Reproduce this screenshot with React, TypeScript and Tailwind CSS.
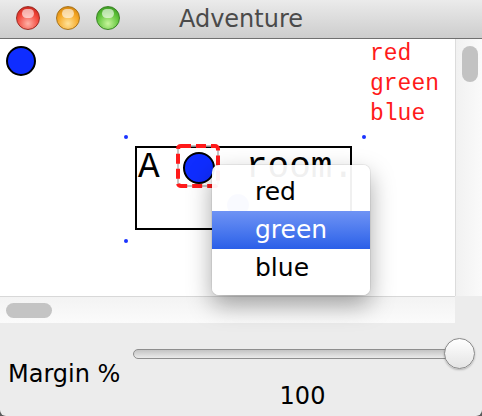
import React from 'react';

const ui = { fontFamily: '"DejaVu Sans", "Noto Sans", sans-serif' };
const mono = { fontFamily: '"Liberation Mono", "Courier New", monospace' };

function Light({ tone }: { tone: 'red' | 'yellow' | 'green' }) {
  const cls =
    tone === 'red'
      ? 'bg-[radial-gradient(circle_at_50%_75%,#ffb3a8_0%,#f2463a_55%,#b5180f_100%)] border-[#9c2d25]'
      : tone === 'yellow'
      ? 'bg-[radial-gradient(circle_at_50%_75%,#ffe39a_0%,#f5a623_55%,#c27508_100%)] border-[#a8741d]'
      : 'bg-[radial-gradient(circle_at_50%_75%,#c8f59c_0%,#5fc43a_55%,#2c8618_100%)] border-[#3b8527]';
  return (
    <div className={`relative h-[24px] w-[24px] rounded-full border ${cls}`}>
      <div className="absolute left-[5px] top-[2px] h-[9px] w-[12px] rounded-full bg-white/60" />
    </div>
  );
}

function Dot({ x, y }: { x: number; y: number }) {
  return <div className="absolute h-[4px] w-[4px] rounded-full bg-[#1a33ff]" style={{ left: x - 2, top: y - 2 }} />;
}

export default function App() {
  const items = ['red', 'green', 'blue'];
  return (
    <div className="h-[416px] w-[482px] bg-[#5a5a5a]" style={ui}>
      <div className="relative flex h-full flex-col overflow-hidden rounded-b-[6px] bg-[#ececec]">
        {/* title bar */}
        <div className="relative flex h-[39px] shrink-0 items-center justify-center border-b border-[#707070] bg-gradient-to-b from-[#ebebeb] to-[#cdcdcd]">
          <div className="absolute left-[16px] top-[6px] flex gap-[16px]">
            <Light tone="red" />
            <Light tone="yellow" />
            <Light tone="green" />
          </div>
          <span className="text-[24px] leading-[28px] text-[#4a4a4a]">Adventure</span>
        </div>

        {/* canvas + vertical scrollbar */}
        <div className="flex h-[257px] shrink-0">
          <div className="relative flex-1 overflow-hidden bg-white">
            <div className="absolute left-[6px] top-[7px] h-[30px] w-[30px] rounded-full border-2 border-black bg-[#0f2dff]" />

            <div className="absolute left-[370px] top-0 text-[23px] leading-[30px] text-[#ff1a1a]" style={mono}>
              <div>red</div>
              <div>green</div>
              <div>blue</div>
            </div>

            <Dot x={126} y={98} />
            <Dot x={364} y={98} />
            <Dot x={126} y={202} />

            <div className="absolute left-[135px] top-[107px] h-[84px] w-[217px] border-2 border-black">
              <div className="whitespace-pre pl-[1px] text-[36px] leading-[40px] text-black" style={mono}>
                {'A    room.'}
              </div>
            </div>

            {/* ghost circle under the menu */}
            <div className="absolute left-[227px] top-[155px] h-[22px] w-[22px] rounded-full bg-[#0f2dff]/40" />

            {/* selected circle */}
            <svg className="absolute left-[176px] top-[105px]" width="44" height="44" viewBox="0 0 44 44">
              <rect x="2" y="2" width="40" height="40" rx="3" fill="none" stroke="#b3b3b3" strokeWidth="1.5" />
              <rect x="2" y="2" width="40" height="40" rx="3" fill="none" stroke="#ff1a1a" strokeWidth="4" strokeDasharray="10 5" />
              <circle cx="23" cy="24" r="15" fill="#0f2dff" stroke="#000" strokeWidth="2" />
            </svg>
          </div>
          <div className="relative w-[27px] border-l border-[#dcdcdc] bg-gradient-to-r from-[#f1f1f1] to-[#fafafa]">
            <div className="absolute left-[6px] top-[7px] h-[36px] w-[16px] rounded-full bg-[#c2c2c2]" />
          </div>
        </div>

        {/* horizontal scrollbar */}
        <div className="flex h-[27px] shrink-0">
          <div className="flex flex-1 items-center border-t border-[#d8d8d8] bg-gradient-to-b from-[#f3f3f3] to-[#fbfbfb] pl-[6px]">
            <div className="h-[15px] w-[46px] rounded-full bg-[#c4c4c4]" />
          </div>
          <div className="w-[27px] bg-[#ececec]" />
        </div>

        {/* bottom panel */}
        <div className="flex flex-1 pl-[8px]">
          <div className="w-[125px] pt-[37px] text-[24px] leading-[28px] text-black">Margin %</div>
          <div className="flex w-[339px] flex-col pt-[15px]">
            <div className="relative h-[31px]">
              <div className="absolute left-0 right-0 top-[11px] h-[10px] rounded-full border border-[#8e8e8e] bg-gradient-to-b from-[#c4c4c4] to-[#ebebeb]" />
              <div className="absolute left-[311px] top-0 h-[31px] w-[31px] rounded-full border border-[#8a8a8a] bg-gradient-to-b from-white to-[#e4e4e4] shadow-[0_1px_2px_rgba(0,0,0,0.25)]" />
            </div>
            <div className="mt-[13px] text-center text-[24px] leading-[28px] text-black">100</div>
          </div>
        </div>

        {/* popup menu */}
        <div className="absolute left-[212px] top-[165px] w-[158px] rounded-[7px] bg-white/[0.94] py-[8px] shadow-[0_10px_24px_rgba(0,0,0,0.35),0_0_0_1px_rgba(0,0,0,0.06)]">
          {items.map((it) => (
            <div
              key={it}
              className={`h-[38px] pl-[43px] text-[25px] leading-[38px] ${
                it === 'green' ? 'bg-gradient-to-b from-[#6f93f4] to-[#2a5fe8] text-white' : 'text-black'
              }`}
            >
              {it}
            </div>
          ))}
        </div>
      </div>
    </div>
  );
}
